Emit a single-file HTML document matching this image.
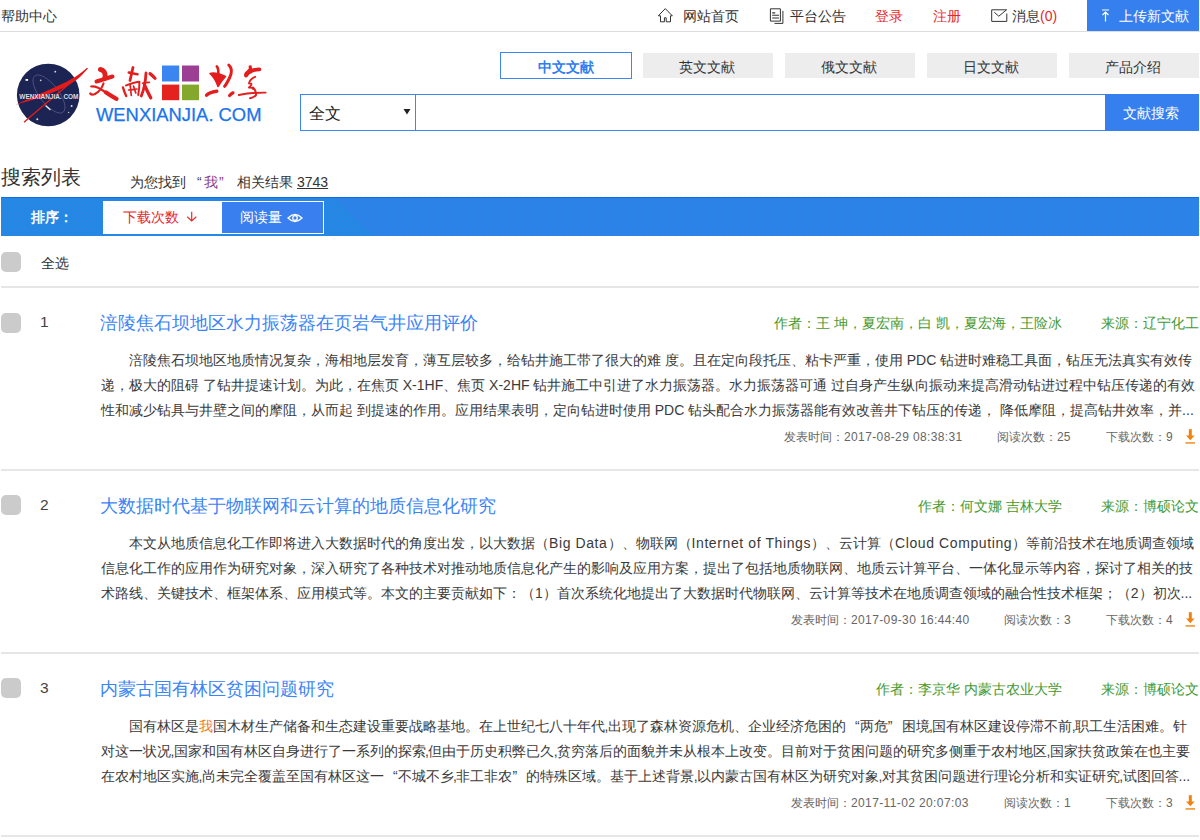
<!DOCTYPE html>
<html><head><meta charset="utf-8">
<style>
*{margin:0;padding:0;box-sizing:border-box}
html,body{width:1200px;height:840px;overflow:hidden;background:#fff}
body{position:relative;font-family:"Liberation Sans",sans-serif;color:#333}
.a{position:absolute;white-space:nowrap}
.t14{font-size:14px;line-height:14px}
.t12{font-size:12px;line-height:12px}
.blue{background:#3580ee}
.hline{position:absolute;left:1px;width:1198px;height:2px;background:#e6e6e6}
.cb{position:absolute;left:1px;width:20px;height:20px;border-radius:5px;background:#cbcbcb}
.num{position:absolute;left:40px;font-size:15.5px;line-height:15.5px;color:#444}
.ttl{position:absolute;left:100px;font-size:18px;line-height:18px;color:#3b84f6;white-space:nowrap}
.au{position:absolute;right:138px;font-size:14px;line-height:14px;color:#44992f;white-space:nowrap}
.src{position:absolute;left:1101px;font-size:14px;line-height:14px;color:#44992f;white-space:nowrap}
.body{position:absolute;left:101px;font-size:14px;line-height:25px;color:#3a3a3a;white-space:nowrap}
.meta{position:absolute;font-size:12px;line-height:12px;color:#666;white-space:nowrap}
.dl{position:absolute;left:1185px;width:11px;height:15px}
.en{letter-spacing:0.6px}
.ql{display:inline-block;width:14px;text-align:right}
.qr{display:inline-block;width:14px;text-align:left}
.cm{margin-left:-0.6px;letter-spacing:-0.6px}
</style></head><body>

<!-- top bar -->
<div class="a t14" style="left:1px;top:9px;color:#333">帮助中心</div>
<div style="position:absolute;left:0;top:31px;width:1200px;height:1px;background:#ddd"></div>

<svg class="a" style="left:657px;top:7px" width="17" height="16" viewBox="0 0 17 16"><path d="M1.3 8.8 L8.3 1.6 L15.3 8.8 M1.3 8.8 H3.5 V14.8 H7.4 V10.8 H9.2 V14.8 H13.5 V8.8 H15.3" fill="none" stroke="#333" stroke-width="1"/></svg>
<div class="a t14" style="left:683px;top:9px">网站首页</div>
<svg class="a" style="left:764px;top:2px" width="24" height="24" viewBox="0 0 24 24"><path d="M6.4 6.8 H16.4 V19.1 H6.4 Z M18.9 8.9 V21.4 H10.5" fill="none" stroke="#333" stroke-width="1"/><path d="M8.2 10.9 H11.2 M8.2 13.3 H15 M8.2 16 H15" fill="none" stroke="#333" stroke-width="1.1"/></svg>
<div class="a t14" style="left:790px;top:9px">平台公告</div>
<div class="a t14" style="left:875px;top:9px;color:#e8262a">登录</div>
<div class="a t14" style="left:933px;top:9px;color:#e8262a">注册</div>
<svg class="a" style="left:985px;top:2px" width="24" height="24" viewBox="0 0 24 24"><path d="M21.8 11.5 V19.4 H6.7 V7.8 H21.6 L13.8 14.2 L9.3 10.3" fill="none" stroke="#333" stroke-width="1"/></svg>
<div class="a t14" style="left:1012px;top:9px">消息<span style="color:#e8262a">(0)</span></div>
<div class="a blue" style="left:1087px;top:0;width:112px;height:31px"></div>
<svg class="a" style="left:1101px;top:9px" width="9" height="13" viewBox="0 0 9 13"><path d="M1 1 H8 M4.5 3 V12.5 M1.5 6 L4.5 3 L7.5 6" fill="none" stroke="#fff" stroke-width="1.2"/></svg>
<div class="a t14" style="left:1119px;top:9px;color:#fff">上传新文献</div>

<!-- logo -->
<svg class="a" style="left:0;top:50px" width="280" height="85" viewBox="0 50 280 85">
  <circle cx="48.2" cy="95" r="31.3" fill="#1b2452"/>
  <ellipse cx="49" cy="94" rx="9.5" ry="23" transform="rotate(-38 49 94)" fill="none" stroke="#585786" stroke-width="0.8"/>
  <rect x="25.5" y="79" width="2.6" height="1.8" fill="#fff"/>
  <circle cx="55.3" cy="71.7" r="0.9" fill="#ddd"/><circle cx="40.7" cy="80.3" r="0.9" fill="#ccc"/>
  <circle cx="71.6" cy="106" r="1" fill="#ddd"/><circle cx="37.3" cy="119.3" r="1" fill="#ddd"/><circle cx="68.6" cy="112.5" r="0.8" fill="#bbb"/>
  <path d="M46 106 L50 109.5" stroke="#eee" stroke-width="1.4" stroke-linecap="round"/>
  <path d="M15.4 104.7 C35 96 52 89 68 81 C77 76 83 72 87.5 68.3 C83 75 77 80.5 68 85.5 C52 93.5 35 100 15.4 104.7 Z" fill="#e31b1b"/>
  <path d="M24 122.3 C40 108 60 92 87.5 68.3" fill="none" stroke="#e31b1b" stroke-width="1.4"/>
  <text x="19.3" y="98.8" font-family="Liberation Sans" font-weight="bold" font-size="7" fill="#dcdce6" textLength="59.2" lengthAdjust="spacingAndGlyphs">WENXIANJIA. COM</text>
  <g fill="none" stroke="#e31e1e" stroke-linecap="round" stroke-linejoin="round">
    <!-- 文 -->
    <path d="M100.5 69.5 C103.5 70 106 73 105 78" stroke-width="5"/>
    <path d="M96.5 81.5 C102 80 107 78 112.5 76.5" stroke-width="4"/>
    <path d="M91.2 86.5 C96 86 101 89 105 92 C109 95 113 97.5 117 99" stroke-width="2.2"/>
    <path d="M106 92.5 C110 95 113 97 116.5 98.8" stroke-width="4.2"/>
    <path d="M103.5 83.5 C102 88 99 92 95 94 C93 95 91 94.5 90.2 93.5" stroke-width="2.2"/>
    <!-- 献 -->
    <path d="M133 67.5 C132 72 131 76 130 80.5" stroke-width="2.8"/>
    <path d="M128.8 72.5 C131 73 134 73.5 137.5 74.2" stroke-width="2.6"/>
    <path d="M123 87.5 C124 91 125 93.5 126.2 96" stroke-width="2.4"/>
    <path d="M126 85.5 C130 84 135 82 139.4 81.8 C139.5 87 139 91 138.2 95" stroke-width="2"/>
    <path d="M130 84.5 C130.5 88 131 92 131.3 95.5 M133.5 86 C134.5 89 135.2 91 135.8 93 M128.5 90 L137 89" stroke-width="1.7"/>
    <path d="M146 73 C145.5 82 143.8 90 141.3 96" stroke-width="2.8"/>
    <path d="M144.5 85 C146.8 90 148.5 94 150.8 97.8" stroke-width="3.2"/>
    <path d="M150 73.6 C152 75 153.5 76.5 155 78.2" stroke-width="3.2"/>
    <path d="M142.5 83.2 C144.5 82.8 147 82.5 149.4 82.4" stroke-width="1.6"/>
    <!-- 共 -->
    <path d="M210 73.5 C214 72.5 220 74 225.5 76.5 C222 80 219.5 84 218 86.5 C216.5 82 214 77 210 73.5 Z" stroke-width="1.6" fill="#e31e1e"/>
    <path d="M216.8 66.5 C218.2 68 218.6 71 218.2 75" stroke-width="2.6"/>
    <path d="M228.8 65 C232 68 232 73 229.5 78 C228 81 226.5 84 224.6 86.3" stroke-width="3"/>
    <path d="M206.6 95.2 C208.5 93.2 212 92 216.8 91.3" stroke-width="3.4"/>
    <path d="M229.6 95.5 C230.5 94.5 231.5 93.5 233 92.8" stroke-width="3.2"/>
    <!-- 享 -->
    <path d="M250.2 66.8 L250.8 72" stroke-width="3.2"/>
    <path d="M246 75.5 C248.5 71 254 69.6 259.4 69.4" stroke-width="3.8"/>
    <path d="M246.5 74 L250 70.5" stroke-width="4.5"/>
    <path d="M255.2 76.8 C252 78 249 81 249 83.5 C251.5 83 253 84 249 87.5 C252 87.5 253.5 88 253 89" stroke-width="1.9"/>
    <path d="M238.8 95 C246 93.5 256 92.5 265.6 92.6" stroke-width="1.9"/>
    <path d="M253 87.5 C255.5 90 256.5 93 255.8 95.5 C254 97 252 98 250 98.2" stroke-width="2"/>
  </g>
  <rect x="162" y="65.5" width="17.2" height="16" fill="#3a85f0"/>
  <rect x="182" y="65.5" width="17" height="16" fill="#9c3f94"/>
  <rect x="162" y="84.6" width="17.2" height="15.6" fill="#e4231f"/>
  <rect x="182" y="84.6" width="17" height="15.6" fill="#84a82c"/>
  <text x="96" y="121.4" font-family="Liberation Sans" font-size="17.8" fill="#1a74ec" stroke="#1a74ec" stroke-width="0.25" textLength="165.5" lengthAdjust="spacingAndGlyphs">WENXIANJIA. COM</text>
</svg>
<!-- tabs -->
<div class="a" style="left:500px;top:52px;width:132px;height:27px;border:1px solid #3d86f0;background:#fff"></div>
<div class="a t14" style="left:538px;top:60px;color:#2f7ef0;font-weight:bold">中文文献</div>
<div class="a" style="left:643px;top:53px;width:130px;height:25px;background:#ededed"></div>
<div class="a t14" style="left:679px;top:60px">英文文献</div>
<div class="a" style="left:785px;top:53px;width:130px;height:25px;background:#ededed"></div>
<div class="a t14" style="left:821px;top:60px">俄文文献</div>
<div class="a" style="left:927px;top:53px;width:130px;height:25px;background:#ededed"></div>
<div class="a t14" style="left:963px;top:60px">日文文献</div>
<div class="a" style="left:1069px;top:53px;width:130px;height:25px;background:#ededed"></div>
<div class="a t14" style="left:1105px;top:60px">产品介绍</div>

<!-- search -->
<div class="a" style="left:300px;top:94px;width:806px;height:37px;border:1px solid #3d86f0"></div>
<div class="a" style="left:415px;top:94px;width:1px;height:37px;background:#3d86f0"></div>
<div class="a" style="left:309px;top:106px;font-size:16px;line-height:16px;color:#222">全文</div>
<svg class="a" style="left:403px;top:108px" width="8" height="7" viewBox="0 0 8 7"><path d="M0.5 1 H7.5 L4 6.5 Z" fill="#222"/></svg>
<div class="a blue" style="left:1105px;top:94px;width:94px;height:37px"></div>
<div class="a t14" style="left:1123px;top:106px;color:#fff">文献搜索</div>

<!-- list header -->
<div class="a" style="left:1px;top:167px;font-size:20px;line-height:20px;color:#333">搜索列表</div>
<div class="a t14" style="left:130px;top:175px;color:#333">为您找到</div>
<div class="a t14" style="left:197px;top:175px;color:#444">“</div>
<div class="a t14" style="left:204px;top:175px;color:#8b3d8e">我</div>
<div class="a t14" style="left:219px;top:175px;color:#8b3d8e">”</div>
<div class="a t14" style="left:237px;top:175px;color:#333">相关结果</div>
<div class="a t14" style="left:297px;top:175px;color:#333;text-decoration:underline">3743</div>

<!-- sort bar -->
<div class="a" style="left:1px;top:197px;width:1198px;height:39px;border-top:1px solid #0f6ce8;background:repeating-linear-gradient(45deg,#3878f0 0,#3878f0 1.27px,#1f8ce0 1.27px,#1f8ce0 2.83px)"></div>
<div class="a t14" style="left:31px;top:210px;color:#fff;font-weight:bold">排序：</div>
<div class="a" style="left:103px;top:201px;width:221px;height:33px;border:1px solid #fff"></div>
<div class="a" style="left:103px;top:201px;width:118px;height:33px;background:#fff"></div>
<div class="a t14" style="left:123px;top:210px;color:#e8262a">下载次数</div>
<svg class="a" style="left:186px;top:210px" width="11" height="13" viewBox="0 0 11 13"><path d="M5.7 1.8 V10.6 M1.3 6.8 L5.7 10.9 L10.3 6.8" fill="none" stroke="#ea2a2a" stroke-width="1.2"/></svg>
<div class="a" style="left:221px;top:201px;width:103px;height:33px;background:#3a7ff0;border:1px solid #fff"></div>
<div class="a t14" style="left:240px;top:210px;color:#fff">阅读量</div>
<svg class="a" style="left:287px;top:213px" width="16" height="10" viewBox="0 0 16 10"><path d="M1 5 Q8 -2 15 5 Q8 12 1 5 Z" fill="none" stroke="#fff" stroke-width="1.3"/><circle cx="8" cy="5" r="2.3" fill="none" stroke="#fff" stroke-width="1.3"/></svg>

<!-- select all -->
<div class="cb" style="top:252px"></div>
<div class="a t14" style="left:41px;top:256px;color:#333">全选</div>
<div class="hline" style="top:286px"></div>

<!-- item 1 -->
<div class="cb" style="top:313px"></div>
<div class="num" style="top:314px">1</div>
<div class="ttl" style="top:314px">涪陵焦石坝地区水力振荡器在页岩气井应用评价</div>
<div class="au" style="top:316px">作者：王 坤，夏宏南，白 凯，夏宏海，王险冰</div>
<div class="src" style="top:316px">来源：辽宁化工</div>
<div class="body" style="top:348px">
<div style="padding-left:28px">涪陵焦石坝地区地质情况复杂，海相地层发育，薄互层较多，给钻井施工带了很大的难 度。且在定向段托压、粘卡严重，使用 PDC 钻进时难稳工具面，钻压无法真实有效传</div>
<div>递，极大的阻碍 了钻井提速计划。为此，在焦页 X-1HF、焦页 X-2HF 钻井施工中引进了水力振荡器。水力振荡器可通 过自身产生纵向振动来提高滑动钻进过程中钻压传递的有效</div>
<div>性和减少钻具与井壁之间的摩阻，从而起 到提速的作用。应用结果表明，定向钻进时使用 PDC 钻头配合水力振荡器能有效改善井下钻压的传递， 降低摩阻，提高钻井效率，并...</div>
</div>
<div class="meta" style="left:784px;top:431px">发表时间：<span style="letter-spacing:0.38px">2017-08-29 08:38:31</span></div>
<div class="meta" style="left:997px;top:431px">阅读次数：25</div>
<div class="meta" style="left:1106px;top:431px">下载次数：9</div>
<svg class="dl" style="top:429px" viewBox="0 0 11 15"><rect x="3.8" y="0.2" width="3" height="7.5" fill="#f0820f"/><path d="M1 6.5 L9.6 6.5 L5.3 11.2 Z" fill="#f0820f"/><rect x="0.5" y="13" width="9.5" height="1.8" fill="#f2a04a"/></svg>
<div class="hline" style="top:469px"></div>

<!-- item 2 -->
<div class="cb" style="top:495px"></div>
<div class="num" style="top:497px">2</div>
<div class="ttl" style="top:497px">大数据时代基于物联网和云计算的地质信息化研究</div>
<div class="au" style="top:499px">作者：何文娜 吉林大学</div>
<div class="src" style="top:499px">来源：博硕论文</div>
<div class="body" style="top:531px">
<div style="padding-left:28px">本文从地质信息化工作即将进入大数据时代的角度出发，以大数据（<span class="en">Big Data</span>）、物联网（<span class="en">Internet of Things</span>）、云计算（<span class="en">Cloud Computing</span>）等前沿技术在地质调查领域</div>
<div>信息化工作的应用作为研究对象，深入研究了各种技术对推动地质信息化产生的影响及应用方案，提出了包括地质物联网、地质云计算平台、一体化显示等内容，探讨了相关的技</div>
<div>术路线、关键技术、框架体系、应用模式等。本文的主要贡献如下：（1）首次系统化地提出了大数据时代物联网、云计算等技术在地质调查领域的融合性技术框架；（2）初次...</div>
</div>
<div class="meta" style="left:791px;top:614px">发表时间：<span style="letter-spacing:0.38px">2017-09-30 16:44:40</span></div>
<div class="meta" style="left:1004px;top:614px">阅读次数：3</div>
<div class="meta" style="left:1106px;top:614px">下载次数：4</div>
<svg class="dl" style="top:612px" viewBox="0 0 11 15"><rect x="3.8" y="0.2" width="3" height="7.5" fill="#f0820f"/><path d="M1 6.5 L9.6 6.5 L5.3 11.2 Z" fill="#f0820f"/><rect x="0.5" y="13" width="9.5" height="1.8" fill="#f2a04a"/></svg>
<div class="hline" style="top:652px"></div>

<!-- item 3 -->
<div class="cb" style="top:678px"></div>
<div class="num" style="top:680px">3</div>
<div class="ttl" style="top:680px">内蒙古国有林区贫困问题研究</div>
<div class="au" style="top:682px">作者：李京华 内蒙古农业大学</div>
<div class="src" style="top:682px">来源：博硕论文</div>
<div class="body" style="top:714px">
<div style="padding-left:28px">国有林区是<span style="color:#f07a1a">我</span>国木材生产储备和生态建设重要战略基地。在上世纪七八十年代<span class="cm">,</span>出现了森林资源危机、企业经济危困的<span class="ql">“</span>两危<span class="qr">”</span>困境<span class="cm">,</span>国有林区建设停滞不前<span class="cm">,</span>职工生活困难。针</div>
<div>对这一状况<span class="cm">,</span>国家和国有林区自身进行了一系列的探索<span class="cm">,</span>但由于历史积弊已久<span class="cm">,</span>贫穷落后的面貌并未从根本上改变。目前对于贫困问题的研究多侧重于农村地区<span class="cm">,</span>国家扶贫政策在也主要</div>
<div>在农村地区实施<span class="cm">,</span>尚未完全覆盖至国有林区这一<span class="ql">“</span>不城不乡<span class="cm">,</span>非工非农<span class="qr">”</span>的特殊区域。基于上述背景<span class="cm">,</span>以内蒙古国有林区为研究对象<span class="cm">,</span>对其贫困问题进行理论分析和实证研究<span class="cm">,</span>试图回答...</div>
</div>
<div class="meta" style="left:791px;top:797px">发表时间：<span style="letter-spacing:0.38px">2017-11-02 20:07:03</span></div>
<div class="meta" style="left:1004px;top:797px">阅读次数：1</div>
<div class="meta" style="left:1106px;top:797px">下载次数：3</div>
<svg class="dl" style="top:795px" viewBox="0 0 11 15"><rect x="3.8" y="0.2" width="3" height="7.5" fill="#f0820f"/><path d="M1 6.5 L9.6 6.5 L5.3 11.2 Z" fill="#f0820f"/><rect x="0.5" y="13" width="9.5" height="1.8" fill="#f2a04a"/></svg>
<div class="hline" style="top:835px"></div>

</body></html>
